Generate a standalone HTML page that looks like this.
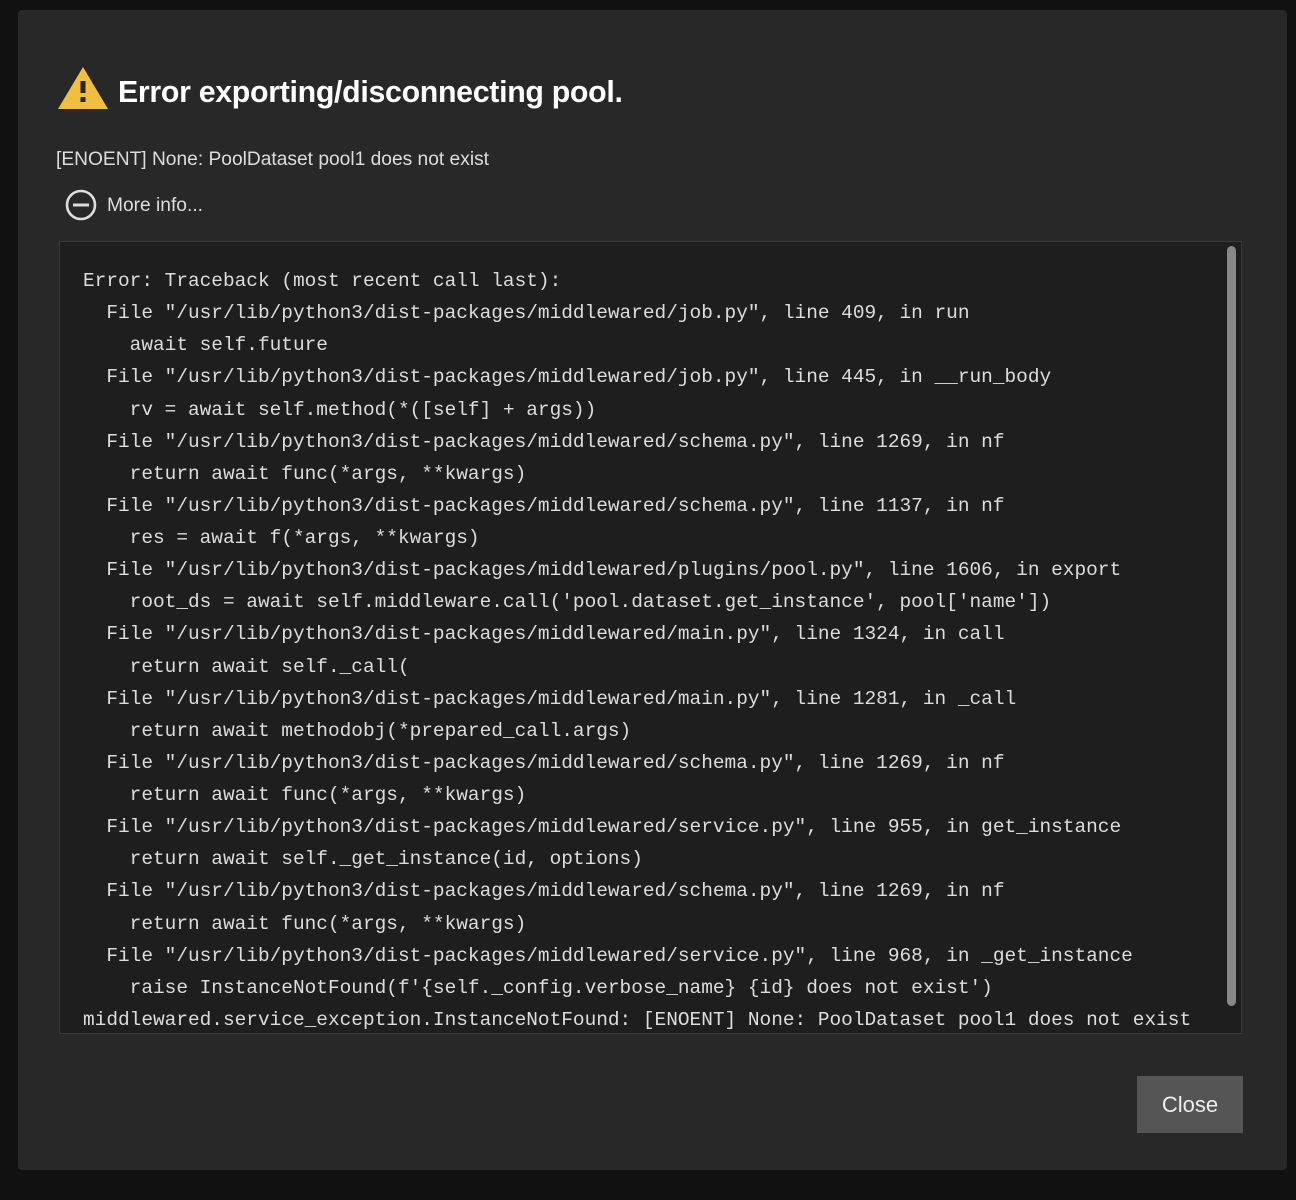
<!DOCTYPE html>
<html><head><style>
html,body{margin:0;padding:0;width:1296px;height:1200px;background:#111;overflow:hidden;font-family:"Liberation Sans",sans-serif}
.dlg{position:absolute;left:18px;top:10px;width:1269px;height:1160px;background:#282828;border-radius:4px}
h1{position:absolute;left:100px;top:66px;margin:0;color:#fff;font-size:30.3px;font-weight:bold;letter-spacing:-0.3px}
.msg{position:absolute;left:38px;top:139px;color:#ddd;font-size:19.2px}
.more{position:absolute;left:89px;top:185px;color:#ddd;font-size:19.2px}
.code{position:absolute;left:41px;top:231px;width:1181px;height:791px;background:#1e1e1e;border:1px solid #3a3a3a;overflow:hidden}
pre{margin:0;position:absolute;left:23px;top:23px;font-family:"Liberation Mono",monospace;font-size:19.45px;line-height:32.13px;color:#ddd}
.sb{position:absolute;right:5px;top:4px;width:9px;height:760px;background:#888;border-radius:5px}
.btn{position:absolute;left:1119px;top:1066px;width:106px;height:57px;background:#555;color:#eee;font-size:22px;text-align:center;line-height:57px}
</style></head><body>
<div class="dlg">
<svg style="position:absolute;left:39px;top:55px" width="52" height="46" viewBox="0 0 52 46"><polygon points="26,2 51,44 1,44" fill="#f0be41"/><rect x="23.5" y="16" width="5" height="12" fill="#282828"/><rect x="23.5" y="32" width="5" height="5" fill="#282828"/></svg>
<h1>Error exporting/disconnecting pool.</h1>
<div class="msg">[ENOENT] None: PoolDataset pool1 does not exist</div>
<svg style="position:absolute;left:47px;top:179px" width="32" height="32" viewBox="0 0 32 32"><circle cx="16" cy="16" r="14" fill="none" stroke="#ddd" stroke-width="2.6"/><rect x="8" y="14.5" width="16" height="3" fill="#ddd"/></svg>
<div class="more">More info...</div>
<div class="code"><pre>Error: Traceback (most recent call last):
  File "/usr/lib/python3/dist-packages/middlewared/job.py", line 409, in run
    await self.future
  File "/usr/lib/python3/dist-packages/middlewared/job.py", line 445, in __run_body
    rv = await self.method(*([self] + args))
  File "/usr/lib/python3/dist-packages/middlewared/schema.py", line 1269, in nf
    return await func(*args, **kwargs)
  File "/usr/lib/python3/dist-packages/middlewared/schema.py", line 1137, in nf
    res = await f(*args, **kwargs)
  File "/usr/lib/python3/dist-packages/middlewared/plugins/pool.py", line 1606, in export
    root_ds = await self.middleware.call('pool.dataset.get_instance', pool['name'])
  File "/usr/lib/python3/dist-packages/middlewared/main.py", line 1324, in call
    return await self._call(
  File "/usr/lib/python3/dist-packages/middlewared/main.py", line 1281, in _call
    return await methodobj(*prepared_call.args)
  File "/usr/lib/python3/dist-packages/middlewared/schema.py", line 1269, in nf
    return await func(*args, **kwargs)
  File "/usr/lib/python3/dist-packages/middlewared/service.py", line 955, in get_instance
    return await self._get_instance(id, options)
  File "/usr/lib/python3/dist-packages/middlewared/schema.py", line 1269, in nf
    return await func(*args, **kwargs)
  File "/usr/lib/python3/dist-packages/middlewared/service.py", line 968, in _get_instance
    raise InstanceNotFound(f'{self._config.verbose_name} {id} does not exist')
middlewared.service_exception.InstanceNotFound: [ENOENT] None: PoolDataset pool1 does not exist</pre><div class="sb"></div></div>
<div class="btn">Close</div>
</div>
</body></html>
